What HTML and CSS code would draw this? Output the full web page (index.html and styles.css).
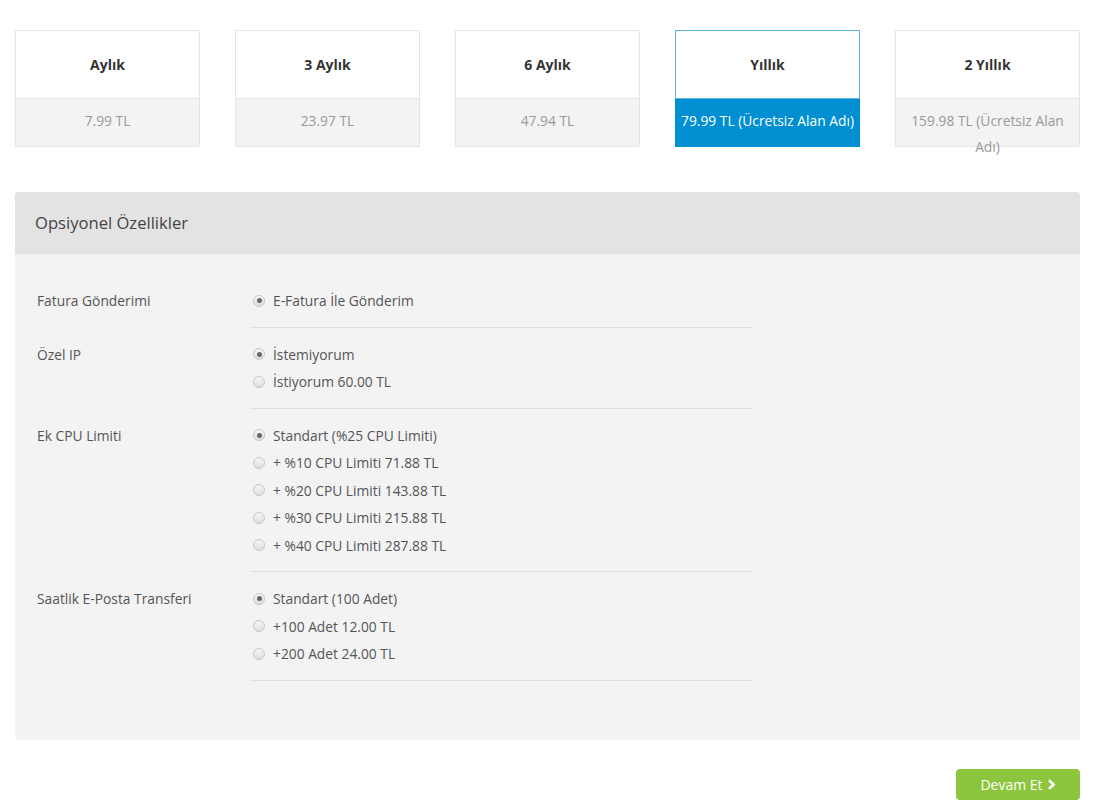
FILE: index.html
```html
<!DOCTYPE html>
<html lang="tr">
<head>
  <meta charset="UTF-8">
  <title>Paket Seçimi</title>
  <link rel="stylesheet" href="styles.css">
</head>
<body>
  <div class="container">
    <div class="cycles">
      <div class="cycle">
        <div class="cycle-name">Aylık</div>
        <div class="cycle-price">7.99 TL</div>
      </div>
      <div class="cycle">
        <div class="cycle-name">3 Aylık</div>
        <div class="cycle-price">23.97 TL</div>
      </div>
      <div class="cycle">
        <div class="cycle-name">6 Aylık</div>
        <div class="cycle-price">47.94 TL</div>
      </div>
      <div class="cycle active">
        <div class="cycle-name">Yıllık</div>
        <div class="cycle-price">79.99 TL (Ücretsiz Alan Adı)</div>
      </div>
      <div class="cycle">
        <div class="cycle-name">2 Yıllık</div>
        <div class="cycle-price">159.98 TL (Ücretsiz Alan Adı)</div>
      </div>
    </div>

    <div class="panel">
      <div class="panel-head">Opsiyonel Özellikler</div>
      <div class="panel-body">
        <div class="opt-row">
          <div class="opt-label">Fatura Gönderimi</div>
          <div class="opt-list">
            <label class="opt"><span class="radio checked"></span>E-Fatura İle Gönderim</label>
          </div>
        </div>
        <div class="opt-row">
          <div class="opt-label">Özel IP</div>
          <div class="opt-list">
            <label class="opt"><span class="radio checked"></span>İstemiyorum</label>
            <label class="opt"><span class="radio"></span>İstiyorum 60.00 TL</label>
          </div>
        </div>
        <div class="opt-row">
          <div class="opt-label">Ek CPU Limiti</div>
          <div class="opt-list">
            <label class="opt"><span class="radio checked"></span>Standart (%25 CPU Limiti)</label>
            <label class="opt"><span class="radio"></span>+ %10 CPU Limiti 71.88 TL</label>
            <label class="opt"><span class="radio"></span>+ %20 CPU Limiti 143.88 TL</label>
            <label class="opt"><span class="radio"></span>+ %30 CPU Limiti 215.88 TL</label>
            <label class="opt"><span class="radio"></span>+ %40 CPU Limiti 287.88 TL</label>
          </div>
        </div>
        <div class="opt-row">
          <div class="opt-label">Saatlik E-Posta Transferi</div>
          <div class="opt-list">
            <label class="opt"><span class="radio checked"></span>Standart (100 Adet)</label>
            <label class="opt"><span class="radio"></span>+100 Adet 12.00 TL</label>
            <label class="opt"><span class="radio"></span>+200 Adet 24.00 TL</label>
          </div>
        </div>
      </div>
    </div>

    <div class="actions">
      <button type="button" class="btn-next">Devam Et
        <svg width="9" height="11" viewBox="0 0 9 11"><path d="M2 1.2 L6.6 5.5 L2 9.8" fill="none" stroke="#fff" stroke-width="2.6"/></svg>
      </button>
    </div>
  </div>
</body>
</html>
```

FILE: styles.css
```css
body {
  font-family: "Open Sans", Arial, sans-serif;
  font-size: 13.8px;
  color: #555;
  margin: 0;
  padding: 0;
  background: #fff;
}
.container {
  padding: 30px 20px 0 15px;
}
.cycles {
  display: grid;
  grid-template-columns: repeat(5, 185px);
  column-gap: 35px;
  align-items: start;
}
.cycle {
  border: 1px solid #e6e6e6;
  text-align: center;
}
.cycle-name {
  height: 67px;
  line-height: 67px;
  font-size: 14px;
  font-weight: bold;
  color: #333;
  background: #fff;
  border-bottom: 1px solid #e6e6e6;
}
.cycle-price {
  height: 47px;
  box-sizing: border-box;
  padding: 9px 8px 0;
  line-height: 26px;
  color: #999;
  background: #f3f3f3;
}
.cycle.active {
  border-color: #5cb3e0;
  border-bottom: none;
}
.cycle.active .cycle-price {
  background: #0090d2;
  color: #fff;
  margin: 0 -1px;
  padding: 9px 0 0;
  height: 48px;
  white-space: nowrap;
}
.cycle.active .cycle-name {
  border-bottom-color: #5cb3e0;
}
.panel {
  margin-top: 45px;
  background: #f3f3f3;
  border-radius: 4px;
  overflow: hidden;
}
.panel-head {
  background: #e3e3e3;
  height: 62px;
  line-height: 62px;
  padding-left: 20px;
  font-size: 16.6px;
  color: #444;
}
.panel-body {
  padding: 33px 22px 59px;
}
.opt-row {
  display: grid;
  grid-template-columns: 213px 502px;
  margin-bottom: 13px;
}
.opt-row:last-child {
  margin-bottom: 0;
}
.opt-label {
  line-height: 27.5px;
  color: #555;
}
.opt-list {
  padding-bottom: 12px;
  border-bottom: 1px solid #dedede;
}
.opt {
  display: flex;
  align-items: center;
  height: 27.5px;
  padding-left: 3px;
  color: #555;
}
.radio {
  width: 12px;
  height: 12px;
  border: 1px solid #c6c6c6;
  border-radius: 50%;
  background: linear-gradient(#f6f6f6, #dedede);
  box-sizing: border-box;
  margin-right: 8px;
  display: flex;
  align-items: center;
  justify-content: center;
}
.radio.checked::after {
  content: "";
  width: 5px;
  height: 5px;
  border-radius: 50%;
  background: #666;
}
.actions {
  display: flex;
  justify-content: flex-end;
  margin-top: 29px;
}
.btn-next {
  width: 124px;
  height: 31px;
  border: none;
  border-radius: 4px;
  background: #8cc63e;
  color: #fff;
  font-family: "Open Sans", Arial, sans-serif;
  font-size: 14px;
  display: flex;
  align-items: center;
  justify-content: center;
  gap: 4px;
  cursor: pointer;
  padding: 0;
}
```
